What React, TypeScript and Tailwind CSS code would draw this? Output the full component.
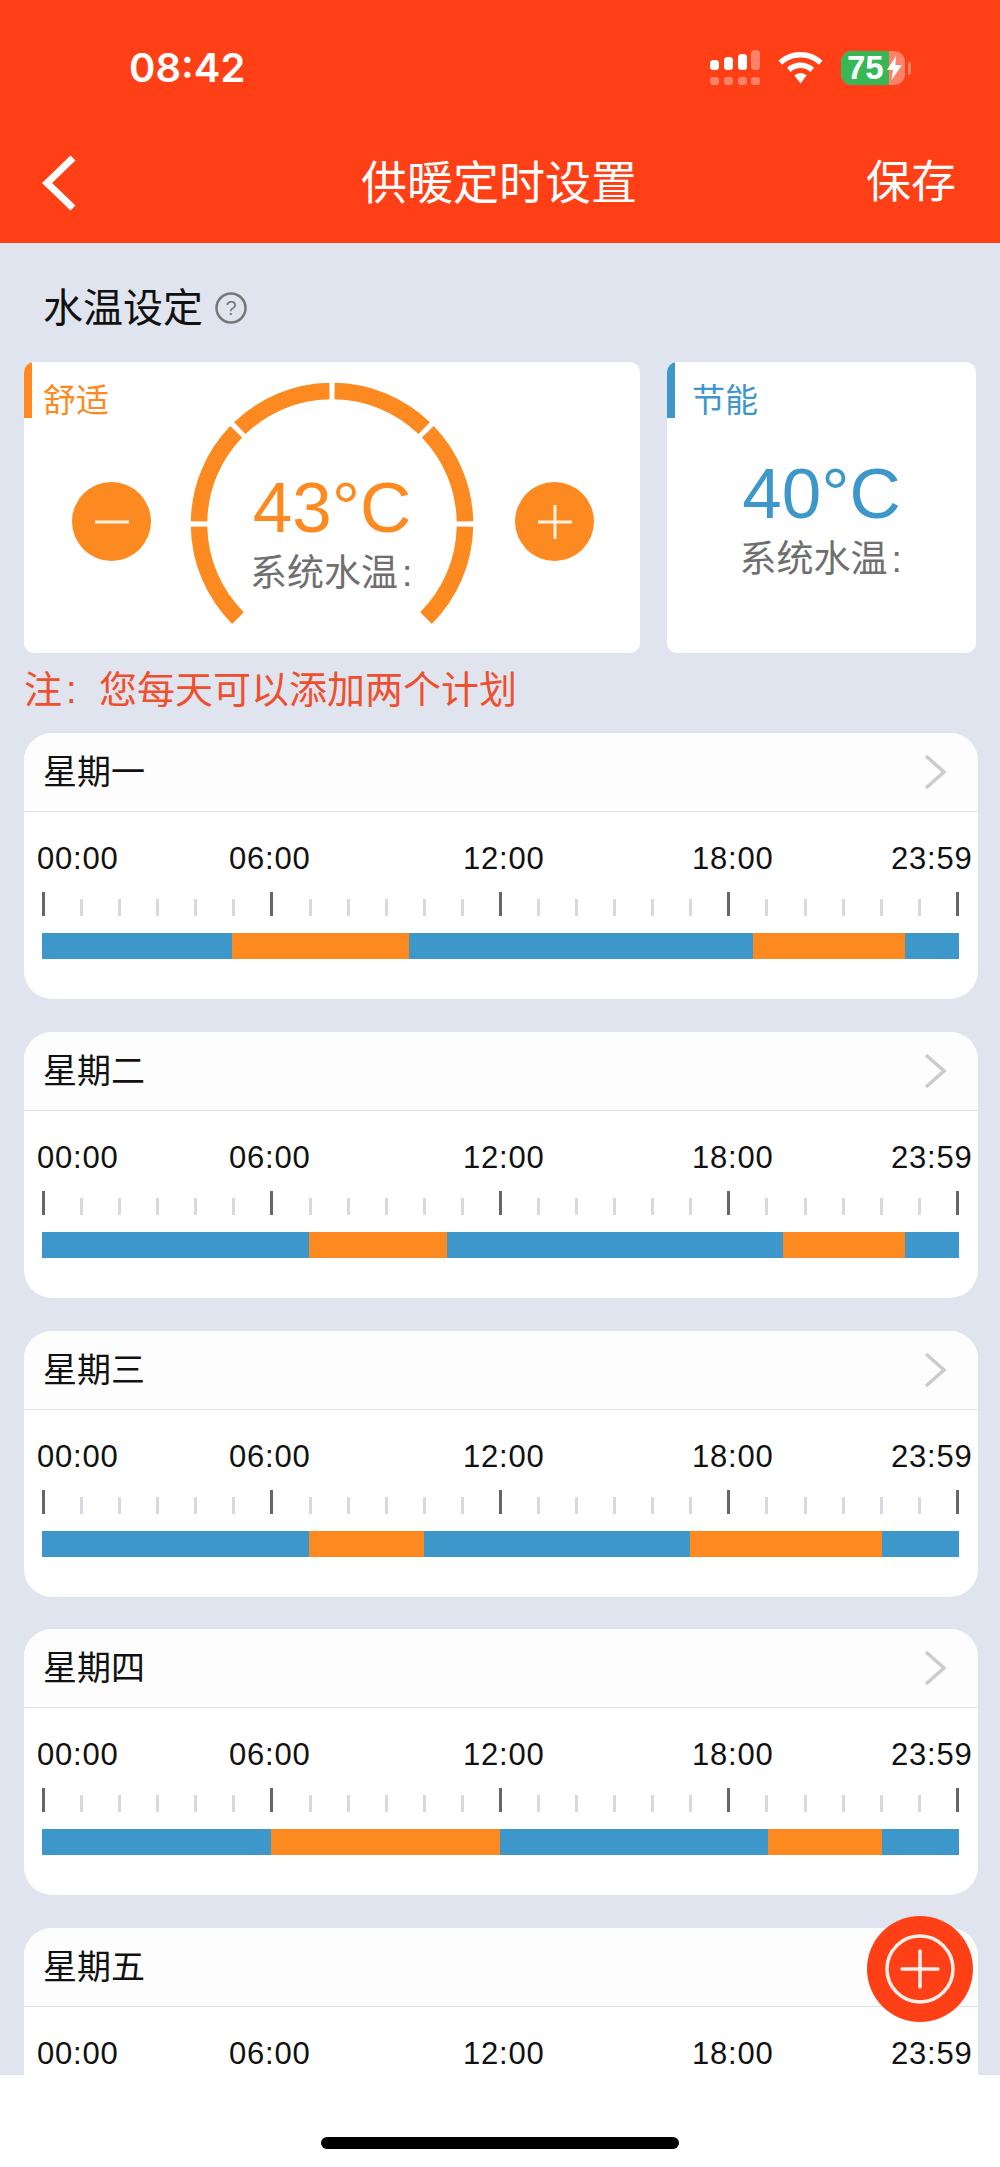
import React from "react";

const cjk = "font-['Liberation_Sans','Noto_Sans_CJK_SC',sans-serif]";

type Day = {
  name: string;
  // orange ranges in bar pixels, bar runs 0..917
  ranges: [number, number][];
};

const days: Day[] = [
  { name: "星期一", ranges: [[190, 367], [711, 863]] },
  { name: "星期二", ranges: [[267, 405], [741, 863]] },
  { name: "星期三", ranges: [[267, 382], [648, 840]] },
  { name: "星期四", ranges: [[229, 458], [726, 840]] },
  { name: "星期五", ranges: [[267, 405], [741, 863]] },
];

const labels = ["00:00", "06:00", "12:00", "18:00", "23:59"];
const ticks = Array.from({ length: 25 }, (_, i) => i);

function polar(cx: number, cy: number, r: number, deg: number) {
  const a = (deg * Math.PI) / 180;
  return [cx + r * Math.sin(a), cy - r * Math.cos(a)];
}

function Gauge() {
  const stops = [-135, -90, -45, 0, 45, 90, 135];
  return (
    <svg width="290" height="250" viewBox="0 0 290 250" className="block">
      {stops.slice(0, -1).map((from, i) => {
        const gap = 1.1;
        const [x1, y1] = polar(145, 145, 133, from + (i === 0 ? 0 : gap));
        const [x2, y2] = polar(145, 145, 133, stops[i + 1] - (i === 5 ? 0 : gap));
        return (
          <path
            key={from}
            d={`M${x1} ${y1}A133 133 0 0 1 ${x2} ${y2}`}
            fill="none"
            stroke="#fd8a21"
            strokeWidth="16.500"
          />
        );
      })}
    </svg>
  );
}

function RoundButton({ plus }: { plus?: boolean }) {
  return (
    <div className="flex h-[79px] w-[79px] items-center justify-center rounded-full bg-[#fd8a21]">
      <svg width="36" height="36" viewBox="0 0 36 36">
        <path
          d={plus ? "M1 18H35M18 1V35" : "M1 18H35"}
          stroke="#fff4e6"
          strokeWidth="3"
          fill="none"
        />
      </svg>
    </div>
  );
}

function SystemTemp() {
  return (
    <div className={`mt-[6px] flex text-[37px] leading-[40px] text-[#6f6f6f] ${cjk}`}>
      系统水温<span className="ml-[4px] w-[12px]">:</span>
    </div>
  );
}

function StatusIcons() {
  return (
    <div className="flex items-center">
      <svg width="52" height="36" viewBox="0 0 52 36" className="block">
        <rect x="0" y="10" width="9" height="10" rx="3.500" fill="#fff" />
        <rect x="14" y="7" width="9" height="13" rx="3.500" fill="#fff" />
        <rect x="28" y="4" width="9" height="16" rx="3.500" fill="#fff" />
        <rect x="41" y="0" width="9" height="20" rx="3.500" fill="#fff" fillOpacity="0.35" />
        <g fill="#fff" fillOpacity="0.35">
          <rect x="0" y="27" width="9" height="8" rx="3" />
          <rect x="14" y="27" width="9" height="8" rx="3" />
          <rect x="28" y="27" width="9" height="8" rx="3" />
          <rect x="41" y="27" width="9" height="8" rx="3" />
        </g>
      </svg>
      <svg width="45" height="32" viewBox="0 0 45 32" className="ml-[16px] block">
        <path
          d="M22.500 0C14 0 6.300 3.300 0.500 8.700L4 12.800C8.900 8.300 15.300 5.500 22.500 5.500S36.100 8.300 41 12.800L44.500 8.700C38.700 3.300 31 0 22.500 0Z"
          fill="#fff"
        />
        <path
          d="M22.500 10.500C17.300 10.500 12.500 12.500 9 15.800L12.600 19.900C15.200 17.500 18.700 16 22.500 16S29.800 17.500 32.400 19.900L36 15.800C32.500 12.500 27.700 10.500 22.500 10.500Z"
          fill="#fff"
        />
        <path d="M22.500 21C20.200 21 18 21.900 16.400 23.500L22.500 31.500L28.600 23.500C27 21.900 24.800 21 22.500 21Z" fill="#fff" />
      </svg>
      <div className="relative ml-[18px] flex h-[34px] w-[64px] rounded-[11px] bg-white/35">
        <div className="h-full w-[48px] rounded-l-[11px] bg-[#38b757]" />
        <span className="absolute left-[6px] top-0 font-['Liberation_Sans',sans-serif] text-[33px] font-bold leading-[34px] text-white">
          75
        </span>
        <svg width="15" height="24" viewBox="0 0 15 24" className="absolute left-[46px] top-[5px]">
          <path d="M9 0L0 14H6L4.500 24L15 9H8.500Z" fill="#fff" />
        </svg>
      </div>
      <div className="ml-[3px] h-[13px] w-[3px] rounded-r-full bg-white/35" />
    </div>
  );
}

function DayCard({ day }: { day: Day }) {
  const segments: { width: number; orange: boolean }[] = [];
  let pos = 0;
  day.ranges.forEach(([from, to]) => {
    segments.push({ width: from - pos, orange: false });
    segments.push({ width: to - from, orange: true });
    pos = to;
  });
  segments.push({ width: 917 - pos, orange: false });

  return (
    <section className="h-[266px] w-[954px] shrink-0 overflow-hidden rounded-[28px] bg-white">
      <div className="flex h-[79px] items-center justify-between border-b border-[#dfe3ee] bg-[#fdfdfe] pl-[19px] pr-[31px]">
        <span className={`text-[34px] leading-none text-[#111] ${cjk}`}>{day.name}</span>
        <svg width="23" height="36" viewBox="0 0 23 36">
          <path d="M2 2L20 18L2 34" fill="none" stroke="#cccccf" strokeWidth="3.500" />
        </svg>
      </div>
      <div className="pl-[13px] pt-[30px]">
        <div className="grid grid-cols-[192px_234px_229px_199px_82px] font-['Liberation_Sans',sans-serif] text-[31px] leading-[34px] tracking-[0.8px] text-[#111]">
          {labels.map((label) => (
            <span key={label}>{label}</span>
          ))}
        </div>
        <div className="ml-[5px] mt-[16px] flex h-[24px] w-[917px] items-end justify-between">
          {ticks.map((i) => (
            <div
              key={i}
              className={i % 6 === 0 ? "h-[24px] w-[3px] bg-[#666]" : "h-[17px] w-[3px] bg-[#d8d9e0]"}
            />
          ))}
        </div>
        <div className="ml-[5px] mt-[17px] flex h-[26px] w-[917px]">
          {segments.map((seg, i) => (
            <div
              key={i}
              className={seg.orange ? "bg-[#fd8a21]" : "bg-[#3d97cb]"}
              style={{ width: seg.width }}
            />
          ))}
        </div>
      </div>
    </section>
  );
}

export default function App() {
  return (
    <div className="relative flex h-[2167px] w-[1000px] flex-col overflow-hidden bg-white">
      <header className="h-[243px] shrink-0 bg-[#ff4017] text-white">
        <div className="flex h-[153px] items-start justify-between pl-[129px] pr-[89px] pt-[50px]">
          <span className="font-['Inter',sans-serif] text-[40px] font-semibold leading-[36px]">08:42</span>
          <StatusIcons />
        </div>
        <div className="grid grid-cols-[1fr_auto_1fr] items-center pl-[42px] pr-[44px]">
          <svg width="34" height="56" viewBox="0 0 34 56" className="block">
            <path d="M31 3L5 28L31 53" fill="none" stroke="#fff" strokeWidth="7" />
          </svg>
          <h1 className={`text-[46px] font-normal leading-[60px] ${cjk}`}>供暖定时设置</h1>
          <span className={`justify-self-end text-[45px] leading-[60px] ${cjk}`}>保存</span>
        </div>
      </header>

      <main className="flex-1 overflow-hidden bg-[#e0e4ee] px-[24px]">
        <div className="flex h-[119px] items-center pl-[19px] pt-[11px]">
          <span className={`text-[40px] leading-none text-[#111] ${cjk}`}>水温设定</span>
          <svg width="32" height="32" viewBox="0 0 32 32" className="ml-[12px]">
            <circle cx="16" cy="16" r="14.500" fill="none" stroke="#777" strokeWidth="2.500" />
            <text x="16" y="23" textAnchor="middle" fontSize="20" fill="#777" fontFamily="Liberation Sans">
              ?
            </text>
          </svg>
        </div>

        <div className="flex gap-[27px]">
          <div className="relative flex h-[291px] w-[616px] items-start overflow-hidden rounded-[10px] bg-white">
            <div className="absolute left-0 top-0 h-[56px] w-[8px] bg-[#fd8a21]" />
            <span className={`absolute left-[19px] top-[21px] text-[33px] leading-[36px] text-[#fd8a21] ${cjk}`}>
              舒适
            </span>
            <div className="ml-[48px] mt-[120px]">
              <RoundButton />
            </div>
            <div className="relative ml-[36px] mt-[17px] h-[250px] w-[290px]">
              <Gauge />
              <div className="absolute inset-x-0 top-[89px] flex flex-col items-center">
                <span className="font-['Liberation_Sans',sans-serif] text-[71px] leading-[80px] text-[#fd8a21]">
                  43°C
                </span>
                <SystemTemp />
              </div>
            </div>
            <div className="ml-[38px] mt-[120px]">
              <RoundButton plus />
            </div>
          </div>

          <div className="relative flex h-[291px] w-[309px] flex-col items-center overflow-hidden rounded-[10px] bg-white pt-[92px]">
            <div className="absolute left-0 top-0 h-[56px] w-[8px] bg-[#3d97cb]" />
            <span className={`absolute left-[25px] top-[21px] text-[33px] leading-[36px] text-[#3d97cb] ${cjk}`}>
              节能
            </span>
            <span className="font-['Liberation_Sans',sans-serif] text-[71px] leading-[80px] text-[#3d97cb]">
              40°C
            </span>
            <SystemTemp />
          </div>
        </div>

        <p className={`flex h-[80px] items-center pb-[7px] text-[38px] leading-none text-[#f04f2d] ${cjk}`}>
          注<span className="w-[37px] pl-[4px]">:</span>您每天可以添加两个计划
        </p>

        <div className="flex flex-col gap-[32.750px]">
          {days.map((day) => (
            <DayCard key={day.name} day={day} />
          ))}
        </div>
      </main>

      <div className="flex h-[92px] shrink-0 justify-center bg-white pt-[62px]">
        <div className="h-[12px] w-[358px] rounded-full bg-black" />
      </div>

      <button
        type="button"
        className="absolute left-[867px] top-[1916px] flex h-[106px] w-[106px] items-center justify-center rounded-full bg-[#ff4017]"
      >
        <svg width="72" height="72" viewBox="0 0 72 72">
          <circle cx="36" cy="36" r="33" fill="none" stroke="#fff0ea" strokeWidth="3.500" />
          <path d="M18 36H54M36 18V54" fill="none" stroke="#fff0ea" strokeWidth="3.500" strokeLinecap="round" />
        </svg>
      </button>
    </div>
  );
}
